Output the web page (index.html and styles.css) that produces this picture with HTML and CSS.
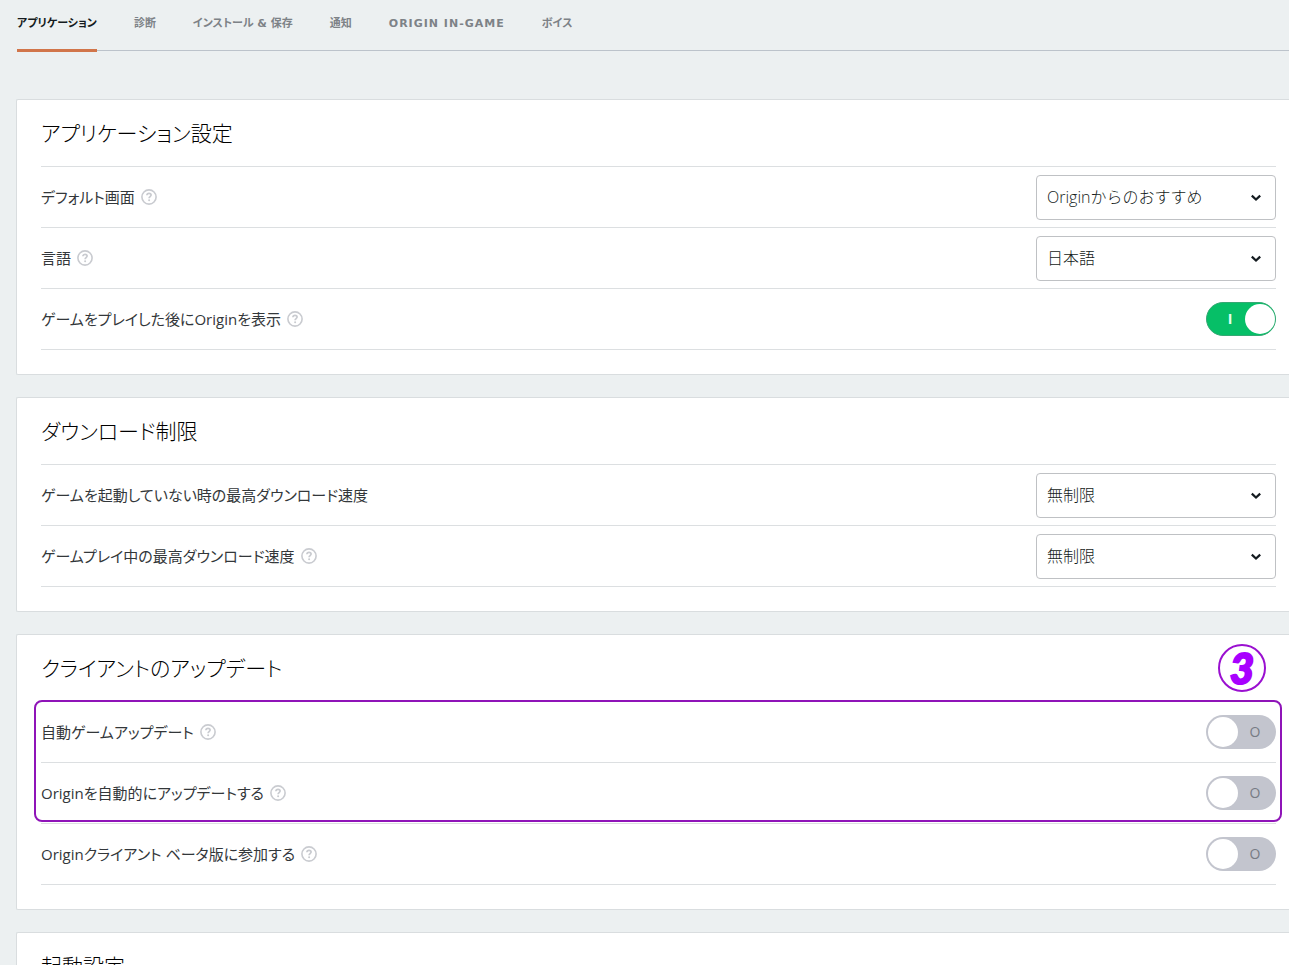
FILE: index.html
```html
<!DOCTYPE html>
<html lang="ja">
<head>
<meta charset="utf-8">
<meta name="viewport" content="width=device-width, initial-scale=1">
<title>アプリケーション設定</title>
<link rel="stylesheet" href="styles.css">
</head>
<body>
<svg class="sprite" aria-hidden="true">
  <symbol id="help" viewBox="0 0 16 16">
    <circle cx="8" cy="8" r="7.1" fill="none" stroke="currentColor" stroke-width="1.6"/>
    <path d="M5.9 6.3C6 4.9 6.9 4.3 8 4.3c1.200 0 2.100.700 2.100 1.800 0 1.500-2 1.500-2 3.100" fill="none" stroke="currentColor" stroke-width="1.700"/>
    <circle cx="8.100" cy="11.300" r="1" fill="currentColor"/>
  </symbol>
  <symbol id="chevron" viewBox="0 0 12 8">
    <path d="M1.800 1.600 6 5.600l4.200-4" fill="none" stroke="currentColor" stroke-width="2.200"/>
  </symbol>
</svg>

<nav class="tabs">
  <a class="tab tab-active" href="#application">アプリケーション</a>
  <a class="tab" href="#diagnostics">診断</a>
  <a class="tab" href="#install">インストール &amp; 保存</a>
  <a class="tab" href="#notifications">通知</a>
  <a class="tab tab-latin" href="#oig">ORIGIN IN-GAME</a>
  <a class="tab" href="#voice">ボイス</a>
</nav>

<main class="sections">
  <section class="card" id="application">
    <header class="card-head"><h2>アプリケーション設定</h2></header>
    <div class="row">
      <label class="name" for="start-page">デフォルト画面</label>
      <button class="help" type="button" aria-label="ヘルプ"><svg><use href="#help"/></svg></button>
      <div class="dropdown">
        <select id="start-page"><option>Originからのおすすめ</option></select>
        <svg><use href="#chevron"/></svg>
      </div>
    </div>
    <div class="row">
      <label class="name" for="language">言語</label>
      <button class="help" type="button" aria-label="ヘルプ"><svg><use href="#help"/></svg></button>
      <div class="dropdown">
        <select id="language"><option>日本語</option></select>
        <svg><use href="#chevron"/></svg>
      </div>
    </div>
    <div class="row">
      <label class="name" for="show-after">ゲームをプレイした後にOriginを表示</label>
      <button class="help" type="button" aria-label="ヘルプ"><svg><use href="#help"/></svg></button>
      <div class="toggle"><input type="checkbox" id="show-after" checked><span class="state">I</span></div>
    </div>
  </section>

  <section class="card">
    <header class="card-head"><h2>ダウンロード制限</h2></header>
    <div class="row">
      <label class="name" for="limit-idle">ゲームを起動していない時の最高ダウンロード速度</label>
      <div class="dropdown">
        <select id="limit-idle"><option>無制限</option></select>
        <svg><use href="#chevron"/></svg>
      </div>
    </div>
    <div class="row">
      <label class="name" for="limit-play">ゲームプレイ中の最高ダウンロード速度</label>
      <button class="help" type="button" aria-label="ヘルプ"><svg><use href="#help"/></svg></button>
      <div class="dropdown">
        <select id="limit-play"><option>無制限</option></select>
        <svg><use href="#chevron"/></svg>
      </div>
    </div>
  </section>

  <section class="card">
    <header class="card-head"><h2>クライアントのアップデート</h2><span class="step">3</span></header>
    <div class="highlight">
      <div class="row">
        <label class="name" for="auto-game">自動ゲームアップデート</label>
        <button class="help" type="button" aria-label="ヘルプ"><svg><use href="#help"/></svg></button>
        <div class="toggle"><input type="checkbox" id="auto-game"><span class="state">O</span></div>
      </div>
      <div class="row">
        <label class="name" for="auto-origin">Originを自動的にアップデートする</label>
        <button class="help" type="button" aria-label="ヘルプ"><svg><use href="#help"/></svg></button>
        <div class="toggle"><input type="checkbox" id="auto-origin"><span class="state">O</span></div>
      </div>
    </div>
    <div class="row">
      <label class="name" for="beta">Originクライアント ベータ版に参加する</label>
      <button class="help" type="button" aria-label="ヘルプ"><svg><use href="#help"/></svg></button>
      <div class="toggle"><input type="checkbox" id="beta"><span class="state">O</span></div>
    </div>
  </section>

  <section class="card">
    <header class="card-head"><h2>起動設定</h2></header>
  </section>
</main>
</body>
</html>
```

FILE: styles.css
```css
* {
  box-sizing: border-box;
}

html {
  scrollbar-width: none;
}

body {
  margin: 0;
  background: #ecf0f1;
  color: #141b20;
  font-family: "Open Sans", "Noto Sans CJK JP", sans-serif;
  font-size: 16px;
}

.sprite {
  display: none;
}

.tabs {
  display: flex;
  gap: 37px;
  height: 51px;
  margin-left: 17px;
  border-bottom: 1px solid #bcc3cb;
}

.tab {
  height: 52px;
  color: #7d8287;
  font: bold 11px/48px "DejaVu Sans", "Noto Sans CJK JP", sans-serif;
  font-feature-settings: "palt";
  text-decoration: none;
  white-space: nowrap;
}

.tab-latin {
  letter-spacing: 1px;
}

.tab-active {
  border-bottom: 3px solid #d1754a;
  color: #141b20;
}

.sections {
  display: flex;
  flex-direction: column;
  gap: 22px;
  padding: 48px 0 0 16px;
}

.card {
  padding: 0 13px 24px 24px;
  border: 1px solid #d9dddf;
  border-right: 0;
  border-radius: 2px 0 0 2px;
  background: #fff;
}

.card-head {
  display: flex;
  align-items: center;
  justify-content: space-between;
  height: 67px;
  padding-right: 10px;
  border-bottom: 1px solid #dcdfe1;
}

h2 {
  margin: 0;
  color: #000;
  font-size: 21px;
  font-weight: 300;
  line-height: 32px;
  font-feature-settings: "palt";
}

.row {
  display: flex;
  align-items: center;
  height: 61px;
  border-bottom: 1px solid #dcdfe1;
}

.name {
  color: #33373a;
  font-size: 15px;
  line-height: 24px;
  font-feature-settings: "palt";
}

.help {
  width: 16px;
  height: 16px;
  margin-left: 6px;
  padding: 0;
  border: 0;
  background: none;
  color: #c9cbd0;
}

.help svg {
  display: block;
  width: 16px;
  height: 16px;
}

.dropdown {
  display: grid;
  align-items: center;
  width: 240px;
  margin-left: auto;
}

.dropdown select {
  grid-area: 1 / 1;
  width: 100%;
  height: 45px;
  padding: 0 32px 0 10px;
  border: 1px solid #bfc1c4;
  border-radius: 4px;
  appearance: none;
  background: #fff;
  color: #141b20;
  font: 300 16px/24px "Open Sans", "Noto Sans CJK JP", sans-serif;
}

.dropdown svg {
  grid-area: 1 / 1;
  justify-self: end;
  width: 12px;
  height: 8px;
  margin: 2px 14px 0 0;
  color: #141b20;
  pointer-events: none;
}

.toggle {
  display: grid;
  align-items: center;
  width: 70px;
  height: 34px;
  margin-left: auto;
}

.toggle input {
  grid-area: 1 / 1;
  display: flex;
  width: 100%;
  height: 100%;
  margin: 0;
  padding: 2px;
  border-radius: 17px;
  appearance: none;
  background: #c3c5ce;
}

.toggle input::before {
  width: 30px;
  height: 30px;
  border-radius: 50%;
  background: #fff;
  content: "";
}

.toggle input:checked {
  justify-content: flex-end;
  border: 1px solid #35a873;
  padding: 1px 0;
  background: #06bf67;
}

.state {
  grid-area: 1 / 1;
  justify-self: end;
  width: 42px;
  color: #777b84;
  font-size: 14px;
  line-height: 20px;
  text-align: center;
  pointer-events: none;
}

input:checked + .state {
  justify-self: start;
  width: 48px;
  color: #e6fff2;
  font-weight: 700;
}

.highlight {
  position: relative;
}

.highlight::after {
  position: absolute;
  inset: -2px -6px 2px -7px;
  border: 2px solid #8f14b8;
  border-radius: 8px;
  content: "";
  pointer-events: none;
}

.step {
  width: 48px;
  height: 48px;
  border: 2px solid #9a10d0;
  border-radius: 50%;
  color: #a800ff;
  font: italic 900 42px/44px Lato, sans-serif;
  text-align: center;
  -webkit-text-stroke: 2px #a800ff;
}
```
